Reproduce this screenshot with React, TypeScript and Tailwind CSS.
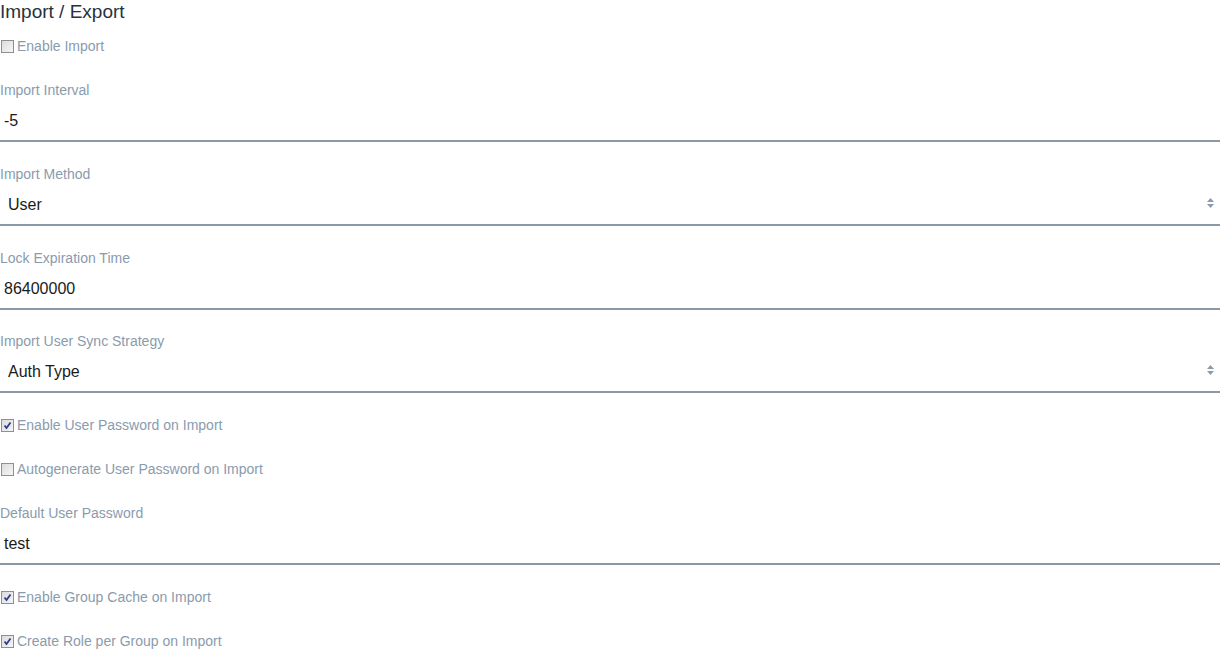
const font = { fontFamily: '"Liberation Sans", Arial, sans-serif' };

function Box({ checked }: { checked?: boolean }) {
  return (
    <span className="relative inline-block w-[13px] h-[13px] border border-[#8e8f8f] bg-gradient-to-br from-[#dcdcdc] to-[#f6f6f6] shrink-0">
      {checked && (
        <svg viewBox="0 0 11 11" className="absolute inset-0 w-[11px] h-[11px]">
          <path d="M2.5 5.5 L4.5 8 L8.5 2.5" fill="none" stroke="#2d3e8c" strokeWidth="1.8" />
        </svg>
      )}
    </span>
  );
}

function Check({ label, checked }: { label: string; checked?: boolean }) {
  return (
    <div className="h-[44px] flex items-center pl-px gap-[3px]">
      <Box checked={checked} />
      <span className="text-sm leading-4 text-[#8a9bad]">{label}</span>
    </div>
  );
}

function Field({ label, value, select, short }: { label: string; value: string; select?: boolean; short?: boolean }) {
  return (
    <div className={short ? 'h-[83px]' : 'h-[84px]'}>
      <div className="pt-[14px] text-sm leading-4 text-[#8a9bad]">{label}</div>
      <div
        className={`h-[44px] border-b-2 border-[#8a99a8] flex items-center pt-[3px] text-base text-[#1b1b1b] ${
          select ? 'pl-2 justify-between' : 'pl-1'
        }`}
      >
        <span>{value}</span>
        {select && (
          <svg width="7" height="11" viewBox="0 0 7 11" className="mr-[6px] -mt-[2px]">
            <path d="M0 4 L3.5 0 L7 4 Z" fill="#8a9bad" />
            <path d="M0 6 L3.5 10 L7 6 Z" fill="#8a9bad" />
          </svg>
        )}
      </div>
    </div>
  );
}

export default function App() {
  return (
    <div className="w-[1220px] h-[658px] bg-white overflow-hidden" style={font}>
      <h2 className="h-[24px] text-[19px] leading-[24px] text-[#27323e]">Import / Export</h2>
      <Check label="Enable Import" />
      <Field label="Import Interval" value="-5" />
      <Field label="Import Method" value="User" select />
      <Field label="Lock Expiration Time" value="86400000" short />
      <Field label="Import User Sync Strategy" value="Auth Type" select />
      <Check label="Enable User Password on Import" checked />
      <Check label="Autogenerate User Password on Import" />
      <Field label="Default User Password" value="test" />
      <Check label="Enable Group Cache on Import" checked />
      <Check label="Create Role per Group on Import" checked />
    </div>
  );
}
